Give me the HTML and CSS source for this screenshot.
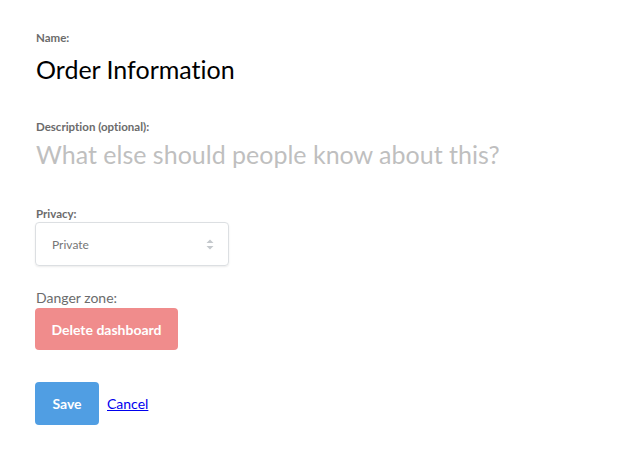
FILE: index.html
```html
<!DOCTYPE html>
<html>
<head>
<meta charset="utf-8">
<link rel="stylesheet" href="styles.css">
</head>
<body>
<form class="form">
  <div class="field field-name">
    <label class="label">Name:</label>
    <div class="title">Order Information</div>
  </div>
  <div class="field field-desc">
    <label class="label">Description (optional):</label>
    <div class="placeholder">What else should people know about this?</div>
  </div>
  <div class="field field-privacy">
    <label class="label">Privacy:</label>
    <div class="select">
      <span class="select-value">Private</span>
      <svg class="select-arrows" width="8" height="11" viewBox="0 0 8 11"><path d="M4 0.5 L7.5 4 H0.5 Z" fill="#c4c8cc"/><path d="M4 10.5 L7.5 7 H0.5 Z" fill="#c4c8cc"/></svg>
    </div>
  </div>
  <div class="field field-danger">
    <div class="danger-label">Danger zone:</div>
    <button type="button" class="btn btn-danger">Delete dashboard</button>
  </div>
  <div class="actions">
    <button type="button" class="btn btn-primary">Save</button>
    <a href="#" class="cancel">Cancel</a>
  </div>
</form>
</body>
</html>
```
FILE: styles.css
```css
html, body {
  margin: 0;
  padding: 0;
  background: #fff;
}
body {
  font-family: Lato, "Open Sans", sans-serif;
  color: #2e353b;
  font-variant-ligatures: none;
}
.form {
  padding: 31px 0 0 36px;
  display: flex;
  flex-direction: column;
}
.label {
  display: block;
  font-size: 11.5px;
  font-weight: 700;
  color: #6b6b6b;
  line-height: 14px;
}
.title {
  font-size: 25px;
  color: #000;
  line-height: 30px;
  margin-top: 9px;
}
.field-desc {
  margin-top: 36px;
}
.placeholder {
  font-size: 25px;
  color: #bfbfbf;
  line-height: 30px;
  margin-top: 5px;
}
.field-privacy {
  margin-top: 38px;
}
.select {
  box-sizing: border-box;
  width: 194px;
  height: 44px;
  margin-left: -1px;
  margin-top: 1px;
  border: 1px solid #dcdfe2;
  border-radius: 4px;
  box-shadow: 0 1px 2px rgba(0,0,0,0.08);
  display: flex;
  align-items: center;
  justify-content: space-between;
  padding: 0 14px 0 16px;
}
.select-value {
  font-size: 12px;
  color: #767676;
}
.field-danger {
  margin-top: 24px;
}
.danger-label {
  font-size: 14px;
  color: #6b6b6b;
  line-height: 16px;
  margin-bottom: 2px;
}
.btn {
  font-family: Lato, "Open Sans", sans-serif;
  font-variant-ligatures: none;
  font-weight: 700;
  font-size: 14px;
  color: #fff;
  border: none;
  border-radius: 4px;
  margin-left: -1px;
  cursor: pointer;
}
.btn-danger {
  background: #f08c8c;
  width: 143px;
  height: 42px;
}
.actions {
  margin-top: 32px;
  display: flex;
  align-items: center;
  gap: 8px;
}
.btn-primary {
  background: #509ee3;
  width: 64px;
  height: 43px;
}
.cancel {
  font-size: 14px;
  color: #0000ee;
  text-decoration: underline;
}
```
